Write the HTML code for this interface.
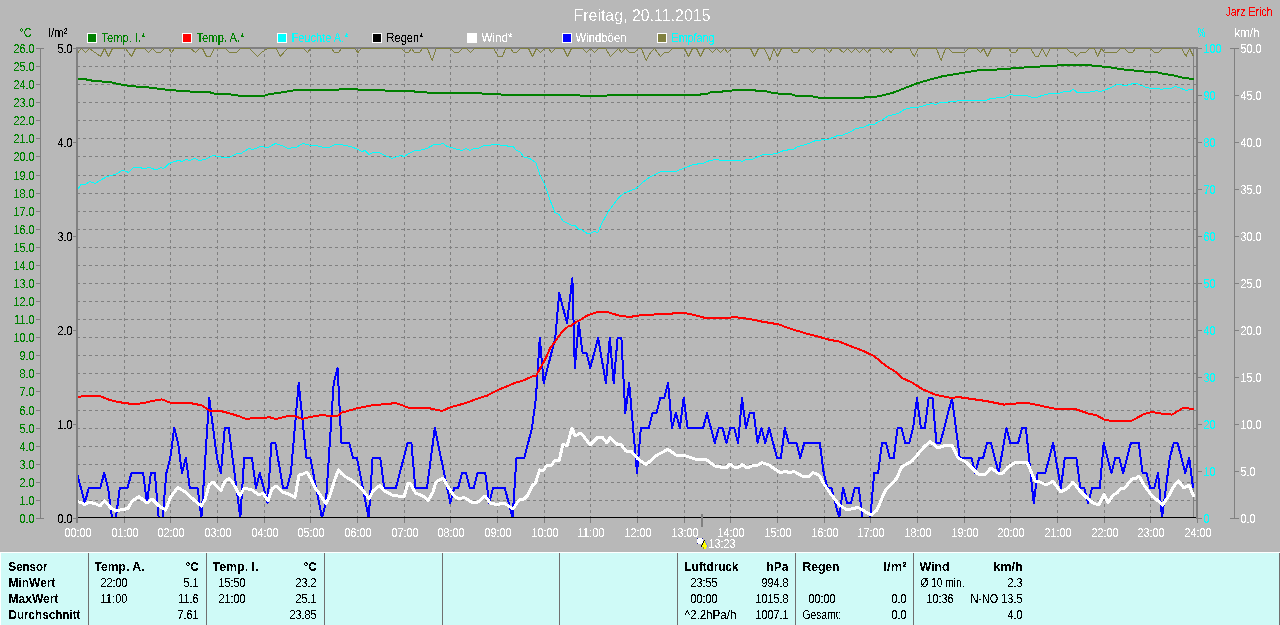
<!DOCTYPE html>
<html><head><meta charset="utf-8"><title>Wetter</title>
<style>html,body{margin:0;padding:0;background:#b8b8b8;overflow:hidden}svg{display:block}</style>
</head><body>
<svg width="1280" height="625" viewBox="0 0 1280 625" font-family="'Liberation Sans', sans-serif" shape-rendering="crispEdges">
<rect x="0" y="0" width="1280" height="625" fill="#b8b8b8"/>
<g stroke="#808080" stroke-width="1" stroke-dasharray="3 3">
<line x1="77" y1="66.5" x2="1196" y2="66.5"/>
<line x1="77" y1="84.5" x2="1196" y2="84.5"/>
<line x1="77" y1="102.5" x2="1196" y2="102.5"/>
<line x1="77" y1="120.5" x2="1196" y2="120.5"/>
<line x1="77" y1="138.5" x2="1196" y2="138.5"/>
<line x1="77" y1="156.5" x2="1196" y2="156.5"/>
<line x1="77" y1="175.5" x2="1196" y2="175.5"/>
<line x1="77" y1="193.5" x2="1196" y2="193.5"/>
<line x1="77" y1="211.5" x2="1196" y2="211.5"/>
<line x1="77" y1="229.5" x2="1196" y2="229.5"/>
<line x1="77" y1="247.5" x2="1196" y2="247.5"/>
<line x1="77" y1="265.5" x2="1196" y2="265.5"/>
<line x1="77" y1="283.5" x2="1196" y2="283.5"/>
<line x1="77" y1="301.5" x2="1196" y2="301.5"/>
<line x1="77" y1="319.5" x2="1196" y2="319.5"/>
<line x1="77" y1="337.5" x2="1196" y2="337.5"/>
<line x1="77" y1="355.5" x2="1196" y2="355.5"/>
<line x1="77" y1="373.5" x2="1196" y2="373.5"/>
<line x1="77" y1="391.5" x2="1196" y2="391.5"/>
<line x1="77" y1="410.5" x2="1196" y2="410.5"/>
<line x1="77" y1="428.5" x2="1196" y2="428.5"/>
<line x1="77" y1="446.5" x2="1196" y2="446.5"/>
<line x1="77" y1="464.5" x2="1196" y2="464.5"/>
<line x1="77" y1="482.5" x2="1196" y2="482.5"/>
<line x1="77" y1="500.5" x2="1196" y2="500.5"/>
<line x1="124.5" y1="48" x2="124.5" y2="517"/>
<line x1="170.5" y1="48" x2="170.5" y2="517"/>
<line x1="217.5" y1="48" x2="217.5" y2="517"/>
<line x1="264.5" y1="48" x2="264.5" y2="517"/>
<line x1="310.5" y1="48" x2="310.5" y2="517"/>
<line x1="357.5" y1="48" x2="357.5" y2="517"/>
<line x1="404.5" y1="48" x2="404.5" y2="517"/>
<line x1="450.5" y1="48" x2="450.5" y2="517"/>
<line x1="497.5" y1="48" x2="497.5" y2="517"/>
<line x1="544.5" y1="48" x2="544.5" y2="517"/>
<line x1="590.5" y1="48" x2="590.5" y2="517"/>
<line x1="637.5" y1="48" x2="637.5" y2="517"/>
<line x1="684.5" y1="48" x2="684.5" y2="517"/>
<line x1="730.5" y1="48" x2="730.5" y2="517"/>
<line x1="777.5" y1="48" x2="777.5" y2="517"/>
<line x1="824.5" y1="48" x2="824.5" y2="517"/>
<line x1="870.5" y1="48" x2="870.5" y2="517"/>
<line x1="917.5" y1="48" x2="917.5" y2="517"/>
<line x1="964.5" y1="48" x2="964.5" y2="517"/>
<line x1="1010.5" y1="48" x2="1010.5" y2="517"/>
<line x1="1057.5" y1="48" x2="1057.5" y2="517"/>
<line x1="1104.5" y1="48" x2="1104.5" y2="517"/>
<line x1="1150.5" y1="48" x2="1150.5" y2="517"/>
</g>
<rect x="1193" y="48" width="1" height="470" fill="#808080"/>
<rect x="76" y="47" width="1122" height="2" fill="#808080"/>
<clipPath id="pc"><rect x="78" y="48" width="1118" height="469"/></clipPath><g clip-path="url(#pc)">
<polyline points="77.9,52.5 81.5,48.5 85.5,52.5 89.5,48.5 100.5,56.5 104.5,48.5 108.5,56.5 112.5,48.5 125.5,48.5 131.5,56.5 135.5,48.5 144.5,48.5 148.5,52.5 152.5,48.5 156.5,52.5 160.5,52.5 164.5,48.5 168.5,48.5 171.5,52.5 174.5,48.5 190.5,48.5 195.5,52.5 199.5,48.5 202.5,48.5 206.5,56.5 210.5,56.5 214.1,48.5 225.5,48.5 229.5,52.5 236.5,52.5 240.5,48.5 249.5,48.5 257.5,56.5 261.5,52.5 267.5,48.5 276.5,48.5 280.1,56.5 287.5,48.5 303.5,48.5 307.5,52.5 310.5,48.5 319.5,48.5 323.5,48.5 326.1,48.5 326.5,48.5 331.5,48.5 334.5,52.5 338.5,52.5 341.5,48.5 354.5,48.5 357.9,52.5 361.5,48.5 401.5,48.5 405.5,52.5 408.5,52.5 411.5,48.5 414.5,52.5 419.5,52.5 422.5,48.5 427.5,48.5 432.1,60.5 436.1,48.5 450.5,48.5 454.5,52.5 458.5,52.5 462.5,48.5 466.5,48.5 470.5,52.5 474.5,48.5 493.5,48.5 498.5,56.5 502.5,56.5 505.5,48.5 510.5,48.5 513.5,52.5 516.5,52.5 520.5,48.5 528.5,48.5 532.5,56.5 536.5,48.5 540.5,52.5 544.5,48.5 548.5,48.5 551.5,52.5 555.5,48.5 563.5,48.5 567.5,56.5 571.5,48.5 582.1,48.5 582.5,48.5 586.5,52.5 590.5,48.5 594.5,52.5 598.5,48.5 605.5,48.5 610.5,56.5 614.5,52.5 618.5,48.5 621.5,52.5 625.5,48.5 629.5,52.5 634.5,52.5 638.5,48.5 641.5,48.5 646.1,60.5 650.5,52.5 654.5,48.5 660.5,56.5 664.5,52.5 668.5,52.5 672.5,48.5 684.5,48.5 688.5,56.5 692.5,48.5 696.5,48.5 700.5,56.5 704.5,48.5 708.5,48.5 712.5,52.5 716.5,48.5 720.5,52.5 724.5,48.5 727.5,52.5 731.5,48.5 750.5,48.5 754.5,56.5 758.5,48.5 764.5,48.5 769.9,60.5 773.9,48.5 777.5,56.5 781.5,48.5 790.5,48.5 793.5,52.5 797.5,52.5 800.5,48.5 808.5,48.5 812.5,52.5 816.5,48.5 825.5,48.5 829.5,52.5 832.5,48.5 838.1,48.5 838.5,48.5 843.5,52.5 847.5,48.5 851.5,52.5 855.5,48.5 859.5,52.5 863.5,48.5 867.5,52.5 870.5,48.5 879.5,48.5 883.5,52.5 887.5,48.5 890.9,52.5 894.5,48.5 909.5,48.5 914.1,56.5 918.1,48.5 936.5,48.5 941.1,60.5 945.5,48.5 948.5,48.5 952.5,52.5 964.5,52.5 968.5,48.5 976.5,48.5 980.5,52.5 983.5,48.5 987.5,56.5 991.5,48.5 1008.5,48.5 1011.5,52.5 1015.5,52.5 1018.5,48.5 1030.5,48.5 1035.5,56.5 1038.5,56.5 1042.1,48.5 1046.1,56.5 1050.1,48.5 1066.5,48.5 1070.5,52.5 1073.5,52.5 1076.5,56.5 1080.5,52.5 1085.5,52.5 1089.5,48.5 1094.1,48.5 1094.5,48.5 1097.5,56.5 1101.5,48.5 1104.5,52.5 1116.5,52.5 1120.5,48.5 1124.5,48.5 1128.5,52.5 1132.5,52.5 1135.5,48.5 1150.5,48.5 1154.5,52.5 1158.5,52.5 1162.5,48.5 1181.5,48.5 1186.1,56.5 1189.5,48.5 1193.5,56.5" fill="none" stroke="#808040" stroke-width="1" stroke-linejoin="round"/>
<polyline points="77.0,473.0 84.8,503.0 88.7,488.0 100.3,488.0 104.2,473.0 108.1,488.0 112.0,518.0 115.9,518.0 119.8,488.0 127.6,488.0 131.4,473.0 143.1,473.0 147.0,503.0 150.9,473.0 154.8,473.0 158.7,518.0 162.6,518.0 166.4,473.0 170.3,458.0 174.2,428.0 178.1,443.0 182.0,473.0 185.9,458.0 189.8,488.0 197.6,488.0 201.4,518.0 205.3,458.0 209.2,398.0 213.1,428.0 217.0,458.0 220.9,473.0 224.8,428.0 228.7,428.0 240.3,518.0 244.2,458.0 252.0,458.0 255.9,488.0 259.8,473.0 263.7,488.0 267.6,503.0 271.4,443.0 275.3,443.0 283.1,488.0 287.0,488.0 290.9,473.0 298.7,383.0 306.4,458.0 310.3,458.0 322.0,518.0 325.9,503.0 333.7,383.0 337.6,368.0 341.4,443.0 349.2,443.0 353.1,458.0 357.0,458.0 368.7,518.0 372.6,458.0 380.3,458.0 384.2,488.0 395.9,488.0 407.6,443.0 411.4,443.0 415.3,488.0 427.0,488.0 434.8,428.0 450.3,503.0 454.2,488.0 458.1,488.0 462.0,473.0 465.9,473.0 469.8,488.0 473.7,488.0 477.6,473.0 485.3,473.0 489.2,503.0 493.1,488.0 504.8,488.0 512.6,518.0 516.4,458.0 524.2,458.0 528.1,443.0 532.0,428.0 535.9,398.0 539.8,338.0 543.7,383.0 547.6,368.0 551.4,353.0 555.3,338.0 559.2,293.0 563.1,308.0 567.0,323.0 572.4,278.0 574.8,368.0 578.7,323.0 582.6,353.0 586.4,353.0 590.3,368.0 594.2,353.0 598.1,338.0 602.0,360.5 605.9,383.0 609.8,338.0 613.7,383.0 617.6,338.0 621.4,338.0 625.3,413.0 629.2,383.0 633.1,428.0 637.0,473.0 640.9,428.0 648.7,428.0 652.6,413.0 656.4,413.0 660.3,398.0 664.2,398.0 668.1,383.0 672.0,428.0 675.9,413.0 679.8,428.0 683.7,398.0 687.6,428.0 703.1,428.0 707.0,413.0 714.8,443.0 718.7,428.0 722.6,428.0 726.4,443.0 730.3,428.0 734.2,428.0 738.1,443.0 742.0,398.0 745.9,428.0 749.8,413.0 753.7,413.0 757.6,443.0 761.4,428.0 765.3,443.0 769.2,428.0 777.0,458.0 780.9,458.0 784.8,428.0 788.7,443.0 796.4,443.0 800.3,458.0 804.2,443.0 819.8,443.0 823.7,473.0 827.6,488.0 831.4,488.0 835.3,503.0 839.2,518.0 843.1,488.0 847.0,503.0 850.9,503.0 854.8,488.0 858.7,488.0 862.6,518.0 870.3,518.0 874.2,473.0 878.1,473.0 882.0,443.0 885.9,443.0 889.8,458.0 893.7,458.0 897.6,428.0 901.4,428.0 905.3,443.0 909.2,443.0 913.1,428.0 917.0,398.0 920.9,428.0 924.8,428.0 928.7,398.0 932.6,398.0 936.4,443.0 940.3,443.0 952.0,398.0 955.9,428.0 959.8,458.0 971.4,458.0 975.3,473.0 979.2,458.0 983.1,458.0 987.0,443.0 990.9,443.0 998.7,473.0 1006.4,428.0 1010.3,443.0 1018.1,443.0 1022.0,428.0 1025.9,428.0 1033.7,503.0 1037.6,473.0 1045.3,473.0 1053.1,443.0 1060.9,488.0 1064.8,458.0 1076.4,458.0 1080.3,488.0 1084.2,488.0 1088.1,503.0 1092.0,488.0 1099.8,488.0 1103.7,443.0 1111.4,473.0 1115.3,458.0 1119.2,458.0 1123.1,473.0 1130.9,443.0 1138.7,443.0 1142.6,473.0 1146.4,473.0 1150.3,488.0 1154.2,488.0 1158.1,473.0 1162.0,518.0 1165.9,488.0 1169.8,458.0 1173.7,443.0 1177.6,443.0 1185.3,473.0 1189.2,458.0 1193.1,488.0" fill="none" stroke="#0000ff" stroke-width="2" stroke-linejoin="round"/>
<polyline points="77.4,501.6 82.0,503.0 85.0,504.6 89.0,502.0 96.0,504.0 100.0,506.0 104.4,501.0 112.0,509.0 116.4,510.6 128.0,508.6 132.0,501.0 139.0,496.6 147.0,503.0 152.0,499.0 159.0,506.0 165.6,510.0 170.6,497.0 178.0,487.4 186.0,492.6 194.0,500.0 201.4,506.0 205.2,499.0 209.0,485.0 213.0,482.0 221.0,490.6 225.0,481.0 229.0,478.6 233.0,483.0 240.0,496.0 244.0,488.0 252.0,490.0 259.0,495.0 263.0,493.0 268.0,500.6 272.0,489.0 276.0,486.0 283.6,492.6 287.6,493.4 295.0,497.4 299.0,475.0 303.0,474.0 307.0,472.0 311.0,479.0 315.0,488.0 319.0,493.0 326.0,504.0 330.0,495.0 335.0,479.0 338.4,470.0 342.0,474.0 346.0,477.0 353.0,481.0 361.0,488.0 365.0,493.0 369.0,499.0 373.0,491.0 380.0,485.4 384.0,490.6 392.0,495.0 404.0,497.0 408.0,483.0 410.0,483.0 415.6,493.0 423.0,496.0 428.0,500.6 433.0,492.0 436.0,482.0 443.0,478.0 447.0,485.0 454.0,496.0 459.0,499.0 464.0,497.4 473.0,503.0 478.0,502.0 485.0,496.0 490.4,503.0 497.0,504.6 504.0,503.0 513.0,509.0 519.0,500.0 524.0,499.0 528.0,495.0 532.0,486.0 535.6,482.6 539.6,470.0 543.0,471.0 547.0,465.0 551.0,466.0 555.0,460.0 559.0,461.0 563.0,444.0 567.0,446.0 572.0,428.0 575.0,436.0 580.0,433.4 582.0,434.0 590.0,445.0 598.0,437.0 602.0,437.0 607.0,443.0 610.0,437.6 618.0,445.0 621.0,444.6 626.0,451.0 631.0,451.0 638.0,459.0 646.0,464.6 657.0,455.0 668.0,449.4 676.0,455.0 684.0,455.4 696.0,459.4 706.0,459.4 715.0,466.0 726.0,468.0 730.0,464.0 734.0,467.0 739.0,467.0 742.0,464.6 747.0,468.0 752.0,466.0 758.0,465.0 762.0,462.6 769.0,465.0 780.0,472.6 786.0,471.4 789.0,473.0 794.0,471.4 802.0,476.0 808.0,477.0 813.0,472.6 819.0,475.0 824.0,484.0 830.0,493.0 837.0,502.0 838.0,504.0 847.0,510.0 858.0,507.4 871.0,515.0 877.0,510.0 885.0,491.0 897.0,478.0 901.6,467.0 912.0,461.0 924.0,447.0 930.0,441.4 938.0,448.0 946.0,445.0 952.4,446.0 958.0,458.0 966.0,462.0 978.0,474.0 985.0,474.6 991.0,468.0 998.0,473.0 1003.0,473.0 1008.0,467.0 1016.0,462.0 1027.0,462.0 1035.0,481.0 1040.0,482.0 1046.0,485.0 1053.0,481.4 1061.0,492.0 1068.0,488.0 1073.0,482.0 1080.0,491.0 1086.0,497.0 1092.0,502.0 1093.0,503.0 1099.0,505.0 1104.0,494.0 1108.0,503.0 1113.0,495.0 1117.0,493.0 1121.0,488.6 1124.0,489.0 1132.0,479.0 1136.0,478.6 1139.0,476.0 1144.0,485.0 1152.0,496.0 1157.0,500.0 1162.6,505.0 1168.0,497.0 1174.0,486.0 1178.4,481.0 1184.0,488.0 1189.0,485.0 1194.0,497.0" fill="none" stroke="#ffffff" stroke-width="3" stroke-linejoin="round"/>
<polyline points="77.4,189.6 81.0,184.6 85.0,184.6 90.0,181.4 95.0,183.6 100.0,180.4 107.0,176.6 115.0,174.6 123.0,170.0 128.4,172.4 133.0,168.0 139.0,167.4 144.0,168.6 150.0,167.4 155.6,170.0 161.0,167.4 163.6,168.6 169.0,163.6 174.0,161.6 179.0,160.4 182.0,161.6 186.0,159.4 190.0,160.6 194.0,158.4 200.0,160.6 206.0,159.0 213.0,155.4 219.0,156.6 226.0,158.0 230.0,157.0 236.0,154.0 241.0,153.4 249.0,148.6 253.0,149.6 260.0,146.6 268.0,147.4 275.6,143.4 282.0,145.6 288.0,148.4 296.0,147.4 303.0,143.4 310.0,145.4 318.0,146.0 325.0,147.6 326.0,147.6 330.0,147.0 335.0,144.4 340.0,144.4 346.0,145.6 352.0,147.0 358.0,149.4 362.0,151.6 365.0,150.4 369.0,154.4 373.0,152.4 379.0,152.4 384.0,155.0 392.0,158.4 397.0,156.6 401.0,155.4 404.0,156.6 410.0,153.0 415.0,150.6 420.0,150.4 427.0,148.4 434.0,144.6 440.0,144.4 443.0,143.4 447.0,146.4 454.0,148.4 462.0,150.6 466.0,148.6 470.0,150.4 474.0,148.6 478.0,148.6 484.0,145.4 490.0,145.4 493.0,144.4 498.0,144.4 502.0,145.6 506.0,145.4 510.0,147.0 513.0,146.4 516.0,150.0 520.0,152.0 524.0,157.0 530.0,158.6 536.0,162.6 540.0,175.0 545.0,185.0 550.0,200.0 555.0,212.4 559.0,214.6 563.0,221.0 571.0,225.0 575.0,225.4 579.0,229.4 581.6,229.4 582.0,230.0 587.0,233.4 590.0,233.4 594.0,231.4 598.0,232.4 601.0,225.0 608.0,212.0 618.0,198.4 624.0,193.0 636.0,188.6 642.0,183.0 650.0,177.0 660.0,172.0 664.0,171.4 676.0,171.4 684.0,168.0 694.0,164.4 703.0,163.4 710.0,160.4 717.0,159.4 720.0,160.4 740.0,160.4 742.0,161.4 746.0,159.4 752.0,159.4 762.0,155.0 770.0,154.4 777.0,153.4 784.0,150.4 793.0,149.4 798.0,146.6 806.0,144.6 816.0,140.4 828.0,139.4 837.6,135.6 838.0,135.6 843.0,135.0 850.0,132.0 856.0,128.6 864.0,127.0 870.0,124.4 874.0,124.4 882.0,120.0 888.0,116.0 898.0,113.6 904.0,109.6 912.0,107.6 918.0,107.4 926.0,105.0 932.0,103.6 936.0,104.4 940.0,102.6 954.0,101.6 960.0,100.4 986.0,100.4 991.0,98.4 1004.0,97.4 1011.0,94.0 1014.0,95.4 1027.0,95.4 1032.0,97.6 1038.0,97.0 1042.0,95.4 1050.0,93.4 1057.0,94.0 1064.0,91.6 1070.0,91.4 1073.0,89.0 1077.0,92.4 1085.0,93.0 1090.0,92.0 1093.6,91.6 1096.0,90.4 1100.0,91.4 1104.0,90.4 1110.0,88.0 1116.0,85.0 1120.0,84.4 1124.0,85.6 1128.0,85.0 1135.0,83.0 1139.0,84.4 1144.0,86.6 1150.0,88.4 1156.0,88.4 1162.0,89.4 1166.0,88.0 1170.0,89.0 1175.0,86.4 1180.0,88.0 1186.0,90.4 1190.0,89.4 1193.0,90.0" fill="none" stroke="#00ffff" stroke-width="1" stroke-linejoin="round"/>
<polyline points="77.4,396.6 100.0,396.0 108.0,399.4 118.0,402.0 132.0,404.0 142.0,403.4 154.0,400.6 162.0,399.4 170.0,402.6 190.0,403.0 202.0,405.4 210.0,411.0 219.0,410.6 230.0,413.4 240.0,416.6 246.0,419.0 254.0,418.0 270.0,417.4 276.0,419.0 290.0,415.6 294.0,415.6 302.0,419.0 310.0,417.0 325.0,414.6 326.0,415.6 338.0,415.6 342.0,412.6 358.0,408.0 374.0,405.0 388.0,404.0 395.0,403.0 400.0,404.4 409.0,408.0 430.0,408.4 442.0,411.0 450.0,407.4 466.0,403.0 478.0,398.4 488.0,395.4 488.0,395.0 498.0,390.0 510.0,385.0 518.0,381.6 520.0,381.6 525.0,379.8 532.5,376.2 536.2,375.8 540.0,368.5 545.0,359.8 550.0,348.5 555.0,341.6 557.5,338.0 562.5,331.1 568.1,326.5 571.2,325.8 576.2,321.8 581.2,319.5 586.2,316.1 591.2,314.0 596.2,312.4 601.2,311.8 606.2,311.8 612.5,313.6 618.8,315.5 626.2,316.5 632.5,316.5 642.5,314.9 651.2,314.9 657.5,314.0 670.0,314.0 675.0,313.0 679.4,313.0 682.0,312.8 690.0,314.0 704.0,317.6 730.0,317.6 734.0,317.0 750.0,319.0 762.0,321.6 779.0,324.4 788.0,328.0 808.0,334.0 822.0,337.6 830.0,340.0 837.0,341.0 838.0,341.0 850.0,346.0 862.0,350.4 874.0,356.0 886.0,366.0 896.0,372.0 902.0,378.0 912.0,382.4 922.0,389.0 930.0,392.4 936.0,395.0 952.0,398.0 958.0,397.0 986.0,401.0 1004.0,404.6 1026.0,402.6 1056.0,409.0 1074.0,408.6 1088.0,413.4 1090.0,414.0 1096.0,415.0 1105.0,420.0 1113.0,421.0 1132.0,420.6 1144.0,414.0 1152.0,412.0 1164.0,414.0 1172.0,414.6 1183.0,408.0 1194.0,409.0" fill="none" stroke="#ff0000" stroke-width="2" stroke-linejoin="round"/>
<polyline points="77.4,79.0 84.0,79.0 94.0,81.0 110.0,82.0 118.0,84.0 130.0,86.0 150.0,87.6 166.0,89.6 182.0,91.0 198.0,92.0 210.0,92.4 216.0,94.0 230.0,94.4 242.0,96.0 263.0,96.0 270.0,94.0 282.0,92.4 296.0,90.0 325.0,90.0 326.0,90.0 338.0,90.0 340.0,88.8 357.0,88.8 359.0,90.0 384.0,90.0 386.0,91.2 414.0,91.2 416.0,92.4 427.0,92.4 429.0,93.2 481.0,93.2 483.0,94.0 500.0,94.0 502.0,95.0 578.0,95.0 581.6,96.0 582.0,96.0 606.0,96.0 608.0,94.8 700.0,94.8 702.0,93.6 708.0,93.6 710.0,92.4 720.0,92.4 724.0,91.0 734.0,90.4 737.0,89.6 754.0,89.6 756.0,90.8 765.0,90.8 770.0,92.4 777.0,93.0 779.0,94.0 790.0,94.0 797.0,96.0 812.0,96.4 821.0,98.0 837.0,98.0 838.0,98.0 863.0,98.0 866.0,97.0 874.0,97.0 882.0,95.6 894.0,92.4 906.0,87.6 918.0,83.0 930.0,79.6 942.0,76.4 954.0,74.4 966.0,72.4 978.0,70.4 990.0,70.0 1010.0,68.6 1030.0,67.0 1050.0,66.0 1064.0,65.0 1090.0,65.0 1093.6,66.0 1094.0,66.0 1100.0,66.0 1104.0,67.0 1112.0,67.6 1120.0,69.0 1128.0,70.0 1140.0,71.0 1148.0,72.0 1156.0,72.0 1164.0,74.0 1172.0,75.0 1180.0,77.0 1184.0,78.0 1194.0,79.0" fill="none" stroke="#008000" stroke-width="2" stroke-linejoin="round"/>
</g>
<rect x="76" y="47" width="1122" height="1" fill="#808080"/>
<rect x="76" y="47" width="2" height="476" fill="#808080"/>
<rect x="1196" y="47" width="2" height="472" fill="#808080"/>
<rect x="78" y="517" width="1118" height="1" fill="#000000"/>
<rect x="124" y="518" width="1" height="5" fill="#808080"/>
<rect x="170" y="518" width="1" height="5" fill="#808080"/>
<rect x="217" y="518" width="1" height="5" fill="#808080"/>
<rect x="264" y="518" width="1" height="5" fill="#808080"/>
<rect x="310" y="518" width="1" height="5" fill="#808080"/>
<rect x="357" y="518" width="1" height="5" fill="#808080"/>
<rect x="404" y="518" width="1" height="5" fill="#808080"/>
<rect x="450" y="518" width="1" height="5" fill="#808080"/>
<rect x="497" y="518" width="1" height="5" fill="#808080"/>
<rect x="544" y="518" width="1" height="5" fill="#808080"/>
<rect x="590" y="518" width="1" height="5" fill="#808080"/>
<rect x="637" y="518" width="1" height="5" fill="#808080"/>
<rect x="684" y="518" width="1" height="5" fill="#808080"/>
<rect x="730" y="518" width="1" height="5" fill="#808080"/>
<rect x="777" y="518" width="1" height="5" fill="#808080"/>
<rect x="824" y="518" width="1" height="5" fill="#808080"/>
<rect x="870" y="518" width="1" height="5" fill="#808080"/>
<rect x="917" y="518" width="1" height="5" fill="#808080"/>
<rect x="964" y="518" width="1" height="5" fill="#808080"/>
<rect x="1010" y="518" width="1" height="5" fill="#808080"/>
<rect x="1057" y="518" width="1" height="5" fill="#808080"/>
<rect x="1104" y="518" width="1" height="5" fill="#808080"/>
<rect x="1150" y="518" width="1" height="5" fill="#808080"/>
<rect x="1197" y="518" width="1" height="5" fill="#808080"/>
<rect x="701" y="514" width="2" height="13" fill="#808080"/>
<rect x="40" y="48" width="1" height="471" fill="#808080"/>
<rect x="36" y="48" width="8" height="1" fill="#808080"/>
<rect x="36" y="66" width="4" height="1" fill="#808080"/>
<rect x="36" y="84" width="4" height="1" fill="#808080"/>
<rect x="36" y="102" width="4" height="1" fill="#808080"/>
<rect x="36" y="120" width="4" height="1" fill="#808080"/>
<rect x="36" y="138" width="4" height="1" fill="#808080"/>
<rect x="36" y="156" width="4" height="1" fill="#808080"/>
<rect x="36" y="175" width="4" height="1" fill="#808080"/>
<rect x="36" y="193" width="4" height="1" fill="#808080"/>
<rect x="36" y="211" width="4" height="1" fill="#808080"/>
<rect x="36" y="229" width="4" height="1" fill="#808080"/>
<rect x="36" y="247" width="4" height="1" fill="#808080"/>
<rect x="36" y="265" width="4" height="1" fill="#808080"/>
<rect x="36" y="283" width="4" height="1" fill="#808080"/>
<rect x="36" y="301" width="4" height="1" fill="#808080"/>
<rect x="36" y="319" width="4" height="1" fill="#808080"/>
<rect x="36" y="337" width="4" height="1" fill="#808080"/>
<rect x="36" y="355" width="4" height="1" fill="#808080"/>
<rect x="36" y="373" width="4" height="1" fill="#808080"/>
<rect x="36" y="391" width="4" height="1" fill="#808080"/>
<rect x="36" y="410" width="4" height="1" fill="#808080"/>
<rect x="36" y="428" width="4" height="1" fill="#808080"/>
<rect x="36" y="446" width="4" height="1" fill="#808080"/>
<rect x="36" y="464" width="4" height="1" fill="#808080"/>
<rect x="36" y="482" width="4" height="1" fill="#808080"/>
<rect x="36" y="500" width="4" height="1" fill="#808080"/>
<rect x="36" y="518" width="8" height="1" fill="#808080"/>
<rect x="73" y="48" width="3" height="1" fill="#808080"/>
<rect x="73" y="142" width="3" height="1" fill="#808080"/>
<rect x="73" y="236" width="3" height="1" fill="#808080"/>
<rect x="73" y="330" width="3" height="1" fill="#808080"/>
<rect x="73" y="424" width="3" height="1" fill="#808080"/>
<rect x="73" y="518" width="3" height="1" fill="#808080"/>
<rect x="1198" y="48" width="4" height="1" fill="#808080"/>
<rect x="1198" y="95" width="4" height="1" fill="#808080"/>
<rect x="1198" y="142" width="4" height="1" fill="#808080"/>
<rect x="1198" y="189" width="4" height="1" fill="#808080"/>
<rect x="1198" y="236" width="4" height="1" fill="#808080"/>
<rect x="1198" y="283" width="4" height="1" fill="#808080"/>
<rect x="1198" y="330" width="4" height="1" fill="#808080"/>
<rect x="1198" y="377" width="4" height="1" fill="#808080"/>
<rect x="1198" y="424" width="4" height="1" fill="#808080"/>
<rect x="1198" y="471" width="4" height="1" fill="#808080"/>
<rect x="1198" y="518" width="4" height="1" fill="#808080"/>
<rect x="1234" y="48" width="1" height="471" fill="#808080"/>
<rect x="1230" y="48" width="9" height="1" fill="#808080"/>
<rect x="1234" y="95" width="5" height="1" fill="#808080"/>
<rect x="1234" y="142" width="5" height="1" fill="#808080"/>
<rect x="1234" y="189" width="5" height="1" fill="#808080"/>
<rect x="1234" y="236" width="5" height="1" fill="#808080"/>
<rect x="1234" y="283" width="5" height="1" fill="#808080"/>
<rect x="1234" y="330" width="5" height="1" fill="#808080"/>
<rect x="1234" y="377" width="5" height="1" fill="#808080"/>
<rect x="1234" y="424" width="5" height="1" fill="#808080"/>
<rect x="1234" y="471" width="5" height="1" fill="#808080"/>
<rect x="1230" y="518" width="9" height="1" fill="#808080"/>
<rect x="87" y="33" width="10" height="10" fill="#ffffff"/>
<rect x="88" y="34" width="8" height="8" fill="#008000"/>
<rect x="182" y="33" width="10" height="10" fill="#ffffff"/>
<rect x="183" y="34" width="8" height="8" fill="#ff0000"/>
<rect x="277" y="33" width="10" height="10" fill="#ffffff"/>
<rect x="278" y="34" width="8" height="8" fill="#00ffff"/>
<rect x="372" y="33" width="10" height="10" fill="#ffffff"/>
<rect x="373" y="34" width="8" height="8" fill="#000000"/>
<rect x="467" y="33" width="10" height="10" fill="#ffffff"/>
<rect x="468" y="34" width="8" height="8" fill="#ffffff"/>
<rect x="562" y="33" width="10" height="10" fill="#ffffff"/>
<rect x="563" y="34" width="8" height="8" fill="#0000ff"/>
<rect x="657" y="33" width="10" height="10" fill="#ffffff"/>
<rect x="658" y="34" width="8" height="8" fill="#808040"/>
<rect x="697" y="538" width="6" height="6" fill="#ffffff"/>
<rect x="697" y="538" width="1" height="1" fill="#2020a0"/>
<rect x="702" y="538" width="1" height="1" fill="#2020a0"/>
<rect x="697" y="543" width="1" height="1" fill="#2020a0"/>
<rect x="702" y="543" width="1" height="1" fill="#2020a0"/>
<rect x="704" y="540" width="1" height="1" fill="#000000"/>
<rect x="703" y="541" width="1" height="1" fill="#000000"/>
<rect x="704" y="541" width="1" height="1" fill="#ffff00"/>
<rect x="705" y="541" width="1" height="1" fill="#8088e0"/>
<rect x="703" y="542" width="1" height="1" fill="#000000"/>
<rect x="704" y="542" width="1" height="1" fill="#ffff00"/>
<rect x="705" y="542" width="1" height="1" fill="#8088e0"/>
<rect x="702" y="543" width="1" height="1" fill="#000000"/>
<rect x="703" y="543" width="3" height="1" fill="#ffff00"/>
<rect x="706" y="543" width="1" height="1" fill="#8088e0"/>
<rect x="702" y="544" width="1" height="1" fill="#000000"/>
<rect x="703" y="544" width="3" height="1" fill="#ffff00"/>
<rect x="706" y="544" width="1" height="1" fill="#8088e0"/>
<rect x="701" y="545" width="1" height="1" fill="#000000"/>
<rect x="702" y="545" width="5" height="1" fill="#ffff00"/>
<rect x="707" y="545" width="1" height="1" fill="#8088e0"/>
<rect x="701" y="546" width="1" height="1" fill="#000000"/>
<rect x="702" y="546" width="5" height="1" fill="#ffff00"/>
<rect x="707" y="546" width="1" height="1" fill="#8088e0"/>
<rect x="703" y="547" width="3" height="2" fill="#ffff00"/>
<rect x="703" y="547" width="1" height="2" fill="#a0a000"/>
<rect x="0" y="552" width="1280" height="73" fill="#cffaf7"/>
<rect x="0" y="552" width="1280" height="1" fill="#ffffff"/>
<rect x="0" y="552" width="1" height="73" fill="#ffffff"/>
<rect x="1279" y="553" width="1" height="72" fill="#707070"/>
<rect x="88" y="553" width="1" height="72" fill="#707070"/>
<rect x="206" y="553" width="1" height="72" fill="#707070"/>
<rect x="324" y="553" width="1" height="72" fill="#707070"/>
<rect x="442" y="553" width="1" height="72" fill="#707070"/>
<rect x="559" y="553" width="1" height="72" fill="#707070"/>
<rect x="677" y="553" width="1" height="72" fill="#707070"/>
<rect x="795" y="553" width="1" height="72" fill="#707070"/>
<rect x="913" y="553" width="1" height="72" fill="#707070"/>
<filter id="t" filterUnits="userSpaceOnUse" x="0" y="0" width="1280" height="625" color-interpolation-filters="sRGB"><feComponentTransfer><feFuncA type="discrete" tableValues="0 0 0 0 0 0 0 0 0 1 1 1 1 1 1 1 1 1 1 1"/></feComponentTransfer></filter>
<filter id="t2" filterUnits="userSpaceOnUse" x="0" y="0" width="1280" height="30" color-interpolation-filters="sRGB"><feComponentTransfer><feFuncA type="discrete" tableValues="0 0 0 1 1"/></feComponentTransfer></filter>
<g filter="url(#t)">
<text x="34.5" y="53" fill="#008000" font-size="12.5" text-anchor="end" textLength="21.0" lengthAdjust="spacingAndGlyphs">26.0</text>
<text x="34.5" y="71" fill="#008000" font-size="12.5" text-anchor="end" textLength="21.0" lengthAdjust="spacingAndGlyphs">25.0</text>
<text x="34.5" y="89" fill="#008000" font-size="12.5" text-anchor="end" textLength="21.0" lengthAdjust="spacingAndGlyphs">24.0</text>
<text x="34.5" y="107" fill="#008000" font-size="12.5" text-anchor="end" textLength="21.0" lengthAdjust="spacingAndGlyphs">23.0</text>
<text x="34.5" y="125" fill="#008000" font-size="12.5" text-anchor="end" textLength="21.0" lengthAdjust="spacingAndGlyphs">22.0</text>
<text x="34.5" y="143" fill="#008000" font-size="12.5" text-anchor="end" textLength="21.0" lengthAdjust="spacingAndGlyphs">21.0</text>
<text x="34.5" y="161" fill="#008000" font-size="12.5" text-anchor="end" textLength="21.0" lengthAdjust="spacingAndGlyphs">20.0</text>
<text x="34.5" y="180" fill="#008000" font-size="12.5" text-anchor="end" textLength="21.0" lengthAdjust="spacingAndGlyphs">19.0</text>
<text x="34.5" y="198" fill="#008000" font-size="12.5" text-anchor="end" textLength="21.0" lengthAdjust="spacingAndGlyphs">18.0</text>
<text x="34.5" y="216" fill="#008000" font-size="12.5" text-anchor="end" textLength="21.0" lengthAdjust="spacingAndGlyphs">17.0</text>
<text x="34.5" y="234" fill="#008000" font-size="12.5" text-anchor="end" textLength="21.0" lengthAdjust="spacingAndGlyphs">16.0</text>
<text x="34.5" y="252" fill="#008000" font-size="12.5" text-anchor="end" textLength="21.0" lengthAdjust="spacingAndGlyphs">15.0</text>
<text x="34.5" y="270" fill="#008000" font-size="12.5" text-anchor="end" textLength="21.0" lengthAdjust="spacingAndGlyphs">14.0</text>
<text x="34.5" y="288" fill="#008000" font-size="12.5" text-anchor="end" textLength="21.0" lengthAdjust="spacingAndGlyphs">13.0</text>
<text x="34.5" y="306" fill="#008000" font-size="12.5" text-anchor="end" textLength="21.0" lengthAdjust="spacingAndGlyphs">12.0</text>
<text x="34.5" y="324" fill="#008000" font-size="12.5" text-anchor="end" textLength="20.2" lengthAdjust="spacingAndGlyphs">11.0</text>
<text x="34.5" y="342" fill="#008000" font-size="12.5" text-anchor="end" textLength="21.0" lengthAdjust="spacingAndGlyphs">10.0</text>
<text x="34.5" y="360" fill="#008000" font-size="12.5" text-anchor="end" textLength="15.0" lengthAdjust="spacingAndGlyphs">9.0</text>
<text x="34.5" y="378" fill="#008000" font-size="12.5" text-anchor="end" textLength="15.0" lengthAdjust="spacingAndGlyphs">8.0</text>
<text x="34.5" y="396" fill="#008000" font-size="12.5" text-anchor="end" textLength="15.0" lengthAdjust="spacingAndGlyphs">7.0</text>
<text x="34.5" y="415" fill="#008000" font-size="12.5" text-anchor="end" textLength="15.0" lengthAdjust="spacingAndGlyphs">6.0</text>
<text x="34.5" y="433" fill="#008000" font-size="12.5" text-anchor="end" textLength="15.0" lengthAdjust="spacingAndGlyphs">5.0</text>
<text x="34.5" y="451" fill="#008000" font-size="12.5" text-anchor="end" textLength="15.0" lengthAdjust="spacingAndGlyphs">4.0</text>
<text x="34.5" y="469" fill="#008000" font-size="12.5" text-anchor="end" textLength="15.0" lengthAdjust="spacingAndGlyphs">3.0</text>
<text x="34.5" y="487" fill="#008000" font-size="12.5" text-anchor="end" textLength="15.0" lengthAdjust="spacingAndGlyphs">2.0</text>
<text x="34.5" y="505" fill="#008000" font-size="12.5" text-anchor="end" textLength="15.0" lengthAdjust="spacingAndGlyphs">1.0</text>
<text x="34.5" y="523" fill="#008000" font-size="12.5" text-anchor="end" textLength="15.0" lengthAdjust="spacingAndGlyphs">0.0</text>
<text x="72.5" y="53" fill="#000000" font-size="12.5" text-anchor="end" textLength="15.0" lengthAdjust="spacingAndGlyphs">5.0</text>
<text x="72.5" y="147" fill="#000000" font-size="12.5" text-anchor="end" textLength="15.0" lengthAdjust="spacingAndGlyphs">4.0</text>
<text x="72.5" y="241" fill="#000000" font-size="12.5" text-anchor="end" textLength="15.0" lengthAdjust="spacingAndGlyphs">3.0</text>
<text x="72.5" y="335" fill="#000000" font-size="12.5" text-anchor="end" textLength="15.0" lengthAdjust="spacingAndGlyphs">2.0</text>
<text x="72.5" y="429" fill="#000000" font-size="12.5" text-anchor="end" textLength="15.0" lengthAdjust="spacingAndGlyphs">1.0</text>
<text x="72.5" y="523" fill="#000000" font-size="12.5" text-anchor="end" textLength="15.0" lengthAdjust="spacingAndGlyphs">0.0</text>
<text x="1203.5" y="53" fill="#00ffff" font-size="12.5" textLength="18.0" lengthAdjust="spacingAndGlyphs">100</text>
<text x="1203.5" y="100" fill="#00ffff" font-size="12.5" textLength="12.0" lengthAdjust="spacingAndGlyphs">90</text>
<text x="1203.5" y="147" fill="#00ffff" font-size="12.5" textLength="12.0" lengthAdjust="spacingAndGlyphs">80</text>
<text x="1203.5" y="194" fill="#00ffff" font-size="12.5" textLength="12.0" lengthAdjust="spacingAndGlyphs">70</text>
<text x="1203.5" y="241" fill="#00ffff" font-size="12.5" textLength="12.0" lengthAdjust="spacingAndGlyphs">60</text>
<text x="1203.5" y="288" fill="#00ffff" font-size="12.5" textLength="12.0" lengthAdjust="spacingAndGlyphs">50</text>
<text x="1203.5" y="335" fill="#00ffff" font-size="12.5" textLength="12.0" lengthAdjust="spacingAndGlyphs">40</text>
<text x="1203.5" y="382" fill="#00ffff" font-size="12.5" textLength="12.0" lengthAdjust="spacingAndGlyphs">30</text>
<text x="1203.5" y="429" fill="#00ffff" font-size="12.5" textLength="12.0" lengthAdjust="spacingAndGlyphs">20</text>
<text x="1203.5" y="476" fill="#00ffff" font-size="12.5" textLength="12.0" lengthAdjust="spacingAndGlyphs">10</text>
<text x="1203.5" y="523" fill="#00ffff" font-size="12.5" textLength="6.0" lengthAdjust="spacingAndGlyphs">0</text>
<text x="1240.5" y="53" fill="#ffffff" font-size="12.5" textLength="21.0" lengthAdjust="spacingAndGlyphs">50.0</text>
<text x="1240.5" y="100" fill="#ffffff" font-size="12.5" textLength="21.0" lengthAdjust="spacingAndGlyphs">45.0</text>
<text x="1240.5" y="147" fill="#ffffff" font-size="12.5" textLength="21.0" lengthAdjust="spacingAndGlyphs">40.0</text>
<text x="1240.5" y="194" fill="#ffffff" font-size="12.5" textLength="21.0" lengthAdjust="spacingAndGlyphs">35.0</text>
<text x="1240.5" y="241" fill="#ffffff" font-size="12.5" textLength="21.0" lengthAdjust="spacingAndGlyphs">30.0</text>
<text x="1240.5" y="288" fill="#ffffff" font-size="12.5" textLength="21.0" lengthAdjust="spacingAndGlyphs">25.0</text>
<text x="1240.5" y="335" fill="#ffffff" font-size="12.5" textLength="21.0" lengthAdjust="spacingAndGlyphs">20.0</text>
<text x="1240.5" y="382" fill="#ffffff" font-size="12.5" textLength="21.0" lengthAdjust="spacingAndGlyphs">15.0</text>
<text x="1240.5" y="429" fill="#ffffff" font-size="12.5" textLength="21.0" lengthAdjust="spacingAndGlyphs">10.0</text>
<text x="1240.5" y="476" fill="#ffffff" font-size="12.5" textLength="15.0" lengthAdjust="spacingAndGlyphs">5.0</text>
<text x="1240.5" y="523" fill="#ffffff" font-size="12.5" textLength="15.0" lengthAdjust="spacingAndGlyphs">0.0</text>
<text x="19.5" y="37" fill="#008000" font-size="12.5" textLength="12.0" lengthAdjust="spacingAndGlyphs">°C</text>
<text x="48.5" y="37" fill="#000000" font-size="12.5" textLength="19.0" lengthAdjust="spacingAndGlyphs">l/m²</text>
<text x="1197.5" y="37" fill="#00ffff" font-size="12.5" textLength="8.0" lengthAdjust="spacingAndGlyphs">%</text>
<text x="1234.5" y="37" fill="#ffffff" font-size="12.5" textLength="25.0" lengthAdjust="spacingAndGlyphs">km/h</text>
<text x="1225.5" y="16" fill="#ff0000" font-size="12.5" textLength="47.0" lengthAdjust="spacingAndGlyphs">Jarz Erich</text>
<text x="101.5" y="42" fill="#008000" font-size="12.5" textLength="44.0" lengthAdjust="spacingAndGlyphs">Temp. I.*</text>
<text x="196.5" y="42" fill="#008000" font-size="12.5" textLength="48.0" lengthAdjust="spacingAndGlyphs">Temp. A.*</text>
<text x="291.5" y="42" fill="#00ffff" font-size="12.5" textLength="57.0" lengthAdjust="spacingAndGlyphs">Feuchte A.*</text>
<text x="386.5" y="42" fill="#000000" font-size="12.5" textLength="37.0" lengthAdjust="spacingAndGlyphs">Regen*</text>
<text x="481.5" y="42" fill="#ffffff" font-size="12.5" textLength="31.0" lengthAdjust="spacingAndGlyphs">Wind*</text>
<text x="575.5" y="42" fill="#ffffff" font-size="12.5" textLength="51.0" lengthAdjust="spacingAndGlyphs">Windböen</text>
<text x="671.5" y="42" fill="#00ffff" font-size="12.5" textLength="43.0" lengthAdjust="spacingAndGlyphs">Empfang</text>
<text x="78.0" y="537" fill="#ffffff" font-size="12.5" text-anchor="middle" textLength="27.0" lengthAdjust="spacingAndGlyphs">00:00</text>
<text x="125.0" y="537" fill="#ffffff" font-size="12.5" text-anchor="middle" textLength="27.0" lengthAdjust="spacingAndGlyphs">01:00</text>
<text x="171.0" y="537" fill="#ffffff" font-size="12.5" text-anchor="middle" textLength="27.0" lengthAdjust="spacingAndGlyphs">02:00</text>
<text x="218.0" y="537" fill="#ffffff" font-size="12.5" text-anchor="middle" textLength="27.0" lengthAdjust="spacingAndGlyphs">03:00</text>
<text x="265.0" y="537" fill="#ffffff" font-size="12.5" text-anchor="middle" textLength="27.0" lengthAdjust="spacingAndGlyphs">04:00</text>
<text x="311.0" y="537" fill="#ffffff" font-size="12.5" text-anchor="middle" textLength="27.0" lengthAdjust="spacingAndGlyphs">05:00</text>
<text x="358.0" y="537" fill="#ffffff" font-size="12.5" text-anchor="middle" textLength="27.0" lengthAdjust="spacingAndGlyphs">06:00</text>
<text x="405.0" y="537" fill="#ffffff" font-size="12.5" text-anchor="middle" textLength="27.0" lengthAdjust="spacingAndGlyphs">07:00</text>
<text x="451.0" y="537" fill="#ffffff" font-size="12.5" text-anchor="middle" textLength="27.0" lengthAdjust="spacingAndGlyphs">08:00</text>
<text x="498.0" y="537" fill="#ffffff" font-size="12.5" text-anchor="middle" textLength="27.0" lengthAdjust="spacingAndGlyphs">09:00</text>
<text x="545.0" y="537" fill="#ffffff" font-size="12.5" text-anchor="middle" textLength="27.0" lengthAdjust="spacingAndGlyphs">10:00</text>
<text x="591.0" y="537" fill="#ffffff" font-size="12.5" text-anchor="middle" textLength="27.0" lengthAdjust="spacingAndGlyphs">11:00</text>
<text x="638.0" y="537" fill="#ffffff" font-size="12.5" text-anchor="middle" textLength="27.0" lengthAdjust="spacingAndGlyphs">12:00</text>
<text x="685.0" y="537" fill="#ffffff" font-size="12.5" text-anchor="middle" textLength="27.0" lengthAdjust="spacingAndGlyphs">13:00</text>
<text x="731.0" y="537" fill="#ffffff" font-size="12.5" text-anchor="middle" textLength="27.0" lengthAdjust="spacingAndGlyphs">14:00</text>
<text x="778.0" y="537" fill="#ffffff" font-size="12.5" text-anchor="middle" textLength="27.0" lengthAdjust="spacingAndGlyphs">15:00</text>
<text x="825.0" y="537" fill="#ffffff" font-size="12.5" text-anchor="middle" textLength="27.0" lengthAdjust="spacingAndGlyphs">16:00</text>
<text x="871.0" y="537" fill="#ffffff" font-size="12.5" text-anchor="middle" textLength="27.0" lengthAdjust="spacingAndGlyphs">17:00</text>
<text x="918.0" y="537" fill="#ffffff" font-size="12.5" text-anchor="middle" textLength="27.0" lengthAdjust="spacingAndGlyphs">18:00</text>
<text x="965.0" y="537" fill="#ffffff" font-size="12.5" text-anchor="middle" textLength="27.0" lengthAdjust="spacingAndGlyphs">19:00</text>
<text x="1011.0" y="537" fill="#ffffff" font-size="12.5" text-anchor="middle" textLength="27.0" lengthAdjust="spacingAndGlyphs">20:00</text>
<text x="1058.0" y="537" fill="#ffffff" font-size="12.5" text-anchor="middle" textLength="27.0" lengthAdjust="spacingAndGlyphs">21:00</text>
<text x="1105.0" y="537" fill="#ffffff" font-size="12.5" text-anchor="middle" textLength="27.0" lengthAdjust="spacingAndGlyphs">22:00</text>
<text x="1151.0" y="537" fill="#ffffff" font-size="12.5" text-anchor="middle" textLength="27.0" lengthAdjust="spacingAndGlyphs">23:00</text>
<text x="1198.0" y="537" fill="#ffffff" font-size="12.5" text-anchor="middle" textLength="27.0" lengthAdjust="spacingAndGlyphs">24:00</text>
<text x="708.5" y="548" fill="#ffffff" font-size="12.5" textLength="27.0" lengthAdjust="spacingAndGlyphs">13:23</text>
<text x="8.5" y="571" fill="#000000" font-size="12.5" font-weight="bold" textLength="39.0" lengthAdjust="spacingAndGlyphs">Sensor</text>
<text x="8.5" y="587" fill="#000000" font-size="12.5" font-weight="bold" textLength="47.0" lengthAdjust="spacingAndGlyphs">MinWert</text>
<text x="8.5" y="603" fill="#000000" font-size="12.5" font-weight="bold" textLength="50.0" lengthAdjust="spacingAndGlyphs">MaxWert</text>
<text x="8.5" y="619" fill="#000000" font-size="12.5" font-weight="bold" textLength="72.0" lengthAdjust="spacingAndGlyphs">Durchschnitt</text>
<text x="94.5" y="571" fill="#000000" font-size="12.5" font-weight="bold" textLength="50.0" lengthAdjust="spacingAndGlyphs">Temp. A.</text>
<text x="198.5" y="571" fill="#000000" font-size="12.5" font-weight="bold" text-anchor="end" textLength="13.0" lengthAdjust="spacingAndGlyphs">°C</text>
<text x="100.5" y="587" fill="#000000" font-size="12.5" textLength="27.0" lengthAdjust="spacingAndGlyphs">22:00</text>
<text x="198.5" y="587" fill="#000000" font-size="12.5" text-anchor="end" textLength="15.0" lengthAdjust="spacingAndGlyphs">5.1</text>
<text x="100.5" y="603" fill="#000000" font-size="12.5" textLength="27.0" lengthAdjust="spacingAndGlyphs">11:00</text>
<text x="198.5" y="603" fill="#000000" font-size="12.5" text-anchor="end" textLength="20.2" lengthAdjust="spacingAndGlyphs">11.6</text>
<text x="198.5" y="619" fill="#000000" font-size="12.5" text-anchor="end" textLength="21.0" lengthAdjust="spacingAndGlyphs">7.61</text>
<text x="212.5" y="571" fill="#000000" font-size="12.5" font-weight="bold" textLength="46.0" lengthAdjust="spacingAndGlyphs">Temp. I.</text>
<text x="316.5" y="571" fill="#000000" font-size="12.5" font-weight="bold" text-anchor="end" textLength="13.0" lengthAdjust="spacingAndGlyphs">°C</text>
<text x="218.5" y="587" fill="#000000" font-size="12.5" textLength="27.0" lengthAdjust="spacingAndGlyphs">15:50</text>
<text x="316.5" y="587" fill="#000000" font-size="12.5" text-anchor="end" textLength="21.0" lengthAdjust="spacingAndGlyphs">23.2</text>
<text x="218.5" y="603" fill="#000000" font-size="12.5" textLength="27.0" lengthAdjust="spacingAndGlyphs">21:00</text>
<text x="316.5" y="603" fill="#000000" font-size="12.5" text-anchor="end" textLength="21.0" lengthAdjust="spacingAndGlyphs">25.1</text>
<text x="316.5" y="619" fill="#000000" font-size="12.5" text-anchor="end" textLength="27.0" lengthAdjust="spacingAndGlyphs">23.85</text>
<text x="684.5" y="571" fill="#000000" font-size="12.5" font-weight="bold" textLength="54.0" lengthAdjust="spacingAndGlyphs">Luftdruck</text>
<text x="788.5" y="571" fill="#000000" font-size="12.5" font-weight="bold" text-anchor="end" textLength="22.0" lengthAdjust="spacingAndGlyphs">hPa</text>
<text x="690.5" y="587" fill="#000000" font-size="12.5" textLength="27.0" lengthAdjust="spacingAndGlyphs">23:55</text>
<text x="788.5" y="587" fill="#000000" font-size="12.5" text-anchor="end" textLength="27.0" lengthAdjust="spacingAndGlyphs">994.8</text>
<text x="690.5" y="603" fill="#000000" font-size="12.5" textLength="27.0" lengthAdjust="spacingAndGlyphs">00:00</text>
<text x="788.5" y="603" fill="#000000" font-size="12.5" text-anchor="end" textLength="33.0" lengthAdjust="spacingAndGlyphs">1015.8</text>
<text x="684.5" y="619" fill="#000000" font-size="12.5" textLength="52.0" lengthAdjust="spacingAndGlyphs">^2.2hPa/h</text>
<text x="788.5" y="619" fill="#000000" font-size="12.5" text-anchor="end" textLength="33.0" lengthAdjust="spacingAndGlyphs">1007.1</text>
<text x="802.5" y="571" fill="#000000" font-size="12.5" font-weight="bold" textLength="37.0" lengthAdjust="spacingAndGlyphs">Regen</text>
<text x="906.5" y="571" fill="#000000" font-size="12.5" font-weight="bold" text-anchor="end" textLength="23.0" lengthAdjust="spacingAndGlyphs">l/m²</text>
<text x="808.5" y="603" fill="#000000" font-size="12.5" textLength="27.0" lengthAdjust="spacingAndGlyphs">00:00</text>
<text x="906.5" y="603" fill="#000000" font-size="12.5" text-anchor="end" textLength="15.0" lengthAdjust="spacingAndGlyphs">0.0</text>
<text x="802.5" y="619" fill="#000000" font-size="12.5" textLength="39.0" lengthAdjust="spacingAndGlyphs">Gesamt:</text>
<text x="906.5" y="619" fill="#000000" font-size="12.5" text-anchor="end" textLength="15.0" lengthAdjust="spacingAndGlyphs">0.0</text>
<text x="919.5" y="571" fill="#000000" font-size="12.5" font-weight="bold" textLength="30.0" lengthAdjust="spacingAndGlyphs">Wind</text>
<text x="1022.5" y="571" fill="#000000" font-size="12.5" font-weight="bold" text-anchor="end" textLength="29.0" lengthAdjust="spacingAndGlyphs">km/h</text>
<text x="920.5" y="587" fill="#000000" font-size="12.5" textLength="44.0" lengthAdjust="spacingAndGlyphs">Ø 10 min.</text>
<text x="1022.5" y="587" fill="#000000" font-size="12.5" text-anchor="end" textLength="15.0" lengthAdjust="spacingAndGlyphs">2.3</text>
<text x="926.5" y="603" fill="#000000" font-size="12.5" textLength="27.0" lengthAdjust="spacingAndGlyphs">10:36</text>
<text x="1022.5" y="603" fill="#000000" font-size="12.5" text-anchor="end" textLength="52.0" lengthAdjust="spacingAndGlyphs">N-NO 13.5</text>
<text x="1022.5" y="619" fill="#000000" font-size="12.5" text-anchor="end" textLength="15.0" lengthAdjust="spacingAndGlyphs">4.0</text>
</g>
<g filter="url(#t2)">
<text x="573.5" y="21" fill="#ffffff" font-size="16" textLength="137.0" lengthAdjust="spacingAndGlyphs">Freitag, 20.11.2015</text>
</g>
</svg>
</body></html>
